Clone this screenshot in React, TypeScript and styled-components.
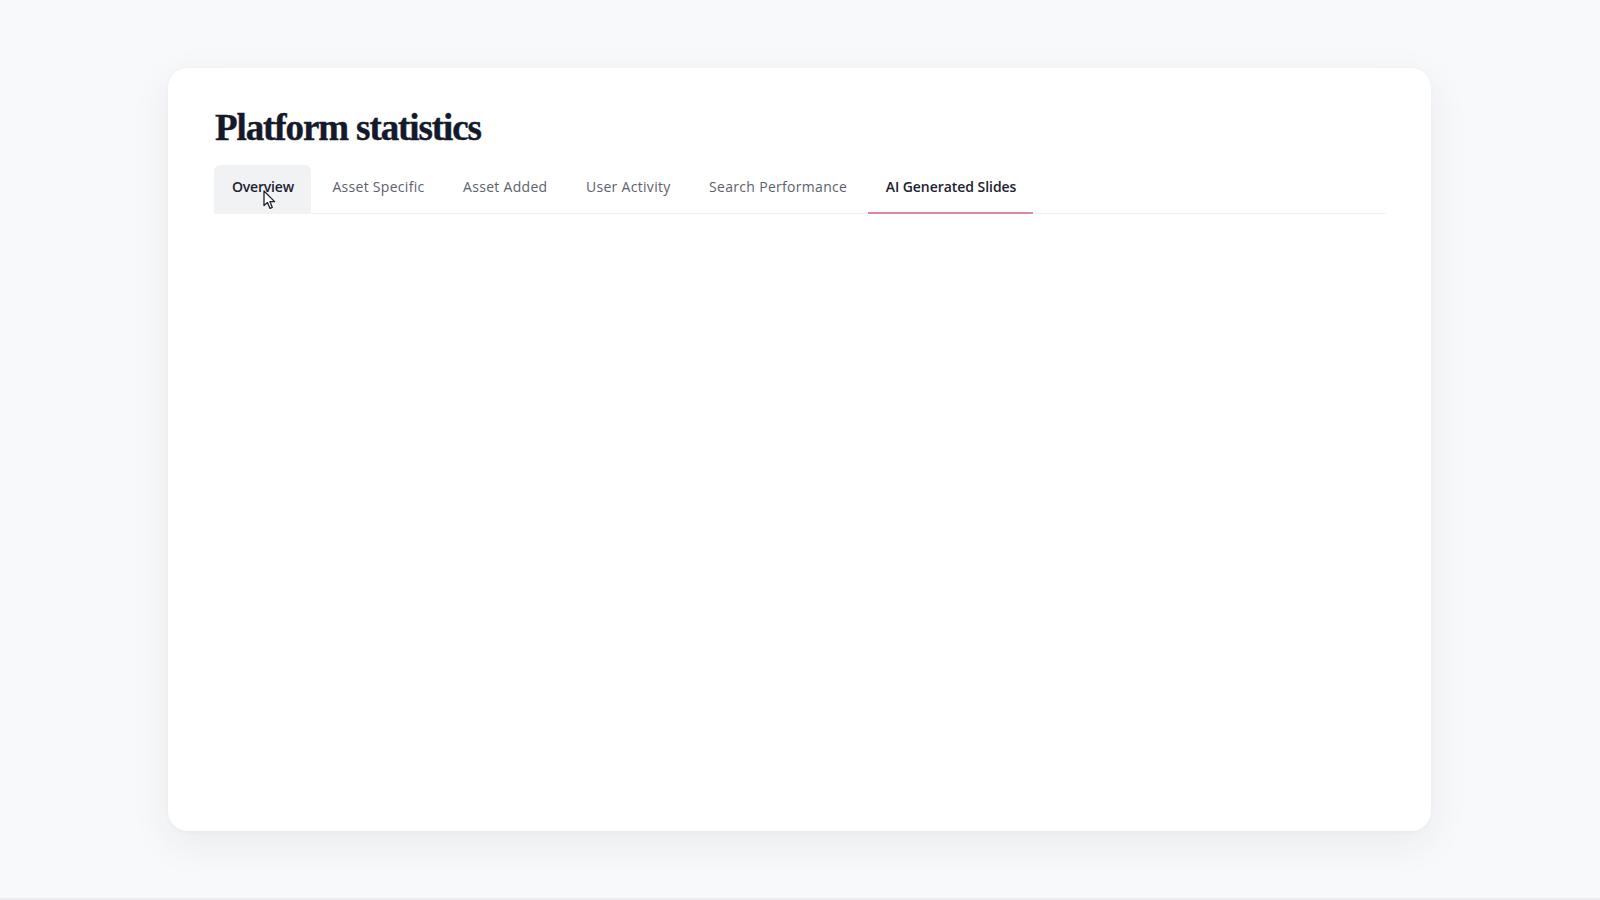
import { useState } from 'react';
import { styled, createGlobalStyle } from 'styled-components';

const GlobalStyle = createGlobalStyle`
  * {
    box-sizing: border-box;
  }

  html,
  body {
    margin: 0;
    padding: 0;
    background: #f8f9fb;
  }

  body {
    font-family: 'Open Sans', 'Liberation Sans', sans-serif;
  }
`;

const TABS = [
  'Overview',
  'Asset Specific',
  'Asset Added',
  'User Activity',
  'Search Performance',
  'AI Generated Slides',
];

export default function App() {
  const [activeTab] = useState('AI Generated Slides');
  const hoveredTab = 'Overview';

  return (
    <>
      <GlobalStyle />
      <Page>
        <Card>
          <Title>Platform statistics</Title>
          <TabList>
            {TABS.map(tab => (
              <Tab
                key={tab}
                $active={tab === activeTab}
                $hovered={tab === hoveredTab}
              >
                {tab}
                {tab === hoveredTab && (
                  <Cursor viewBox="0 0 13 20" aria-hidden>
                    <path
                      d="M1 1 L1 15.6 L4.5 12.4 L7 18.4 L9.3 17.4 L6.9 11.6 L11.6 11.6 Z"
                      fill="#ffffff"
                      stroke="#1d2130"
                      strokeWidth="1.3"
                      strokeLinejoin="round"
                    />
                  </Cursor>
                )}
              </Tab>
            ))}
          </TabList>
        </Card>
      </Page>
      <BottomEdge />
    </>
  );
}

const Page = styled.div`
  width: 1600px;
  height: 898px;
  padding: 68px 0 0 168px;
`;

const Card = styled.div`
  width: 1263px;
  height: 763px;
  padding: 35px 45px 0 46px;
  background: #ffffff;
  border-radius: 20px;
  box-shadow: 0 12px 40px rgba(30, 36, 60, 0.07), 0 1px 4px rgba(30, 36, 60, 0.03);
`;

const Title = styled.h1`
  margin: 0 0 0 1px;
  font-family: 'Liberation Serif', 'DejaVu Serif', serif;
  font-size: 37px;
  font-weight: 700;
  line-height: 50px;
  letter-spacing: -1.1px;
  color: #141a2c;
  -webkit-text-stroke: 0.4px #141a2c;
`;

const TabList = styled.div`
  display: flex;
  gap: 3.5px;
  margin-top: 12px;
  border-bottom: 1px solid #f0f1f4;
`;

const Tab = styled.div<{ $active: boolean; $hovered: boolean }>`
  position: relative;
  height: 49px;
  padding: 0 17px 5px 18px;
  display: flex;
  align-items: center;
  margin-bottom: -1px;
  font-size: 14px;
  font-weight: ${({ $active, $hovered }) => ($active || $hovered ? 600 : 500)};
  letter-spacing: ${({ $active, $hovered }) =>
    $hovered ? '-0.2px' : $active ? '-0.05px' : '0.3px'};
  color: ${({ $active, $hovered }) => ($active || $hovered ? '#1d2130' : '#5d616d')};
  background: ${({ $hovered }) => ($hovered ? '#f1f2f4' : 'transparent')};
  border-radius: 6px 6px 0 0;
  border-bottom: 2px solid ${({ $active }) => ($active ? '#dd86a8' : 'transparent')};
  white-space: nowrap;
  cursor: pointer;
`;

const Cursor = styled.svg`
  position: absolute;
  left: 49px;
  top: 25px;
  width: 13px;
  height: 20px;
`;

const BottomEdge = styled.div`
  height: 2px;
  background: #ececef;
`;
